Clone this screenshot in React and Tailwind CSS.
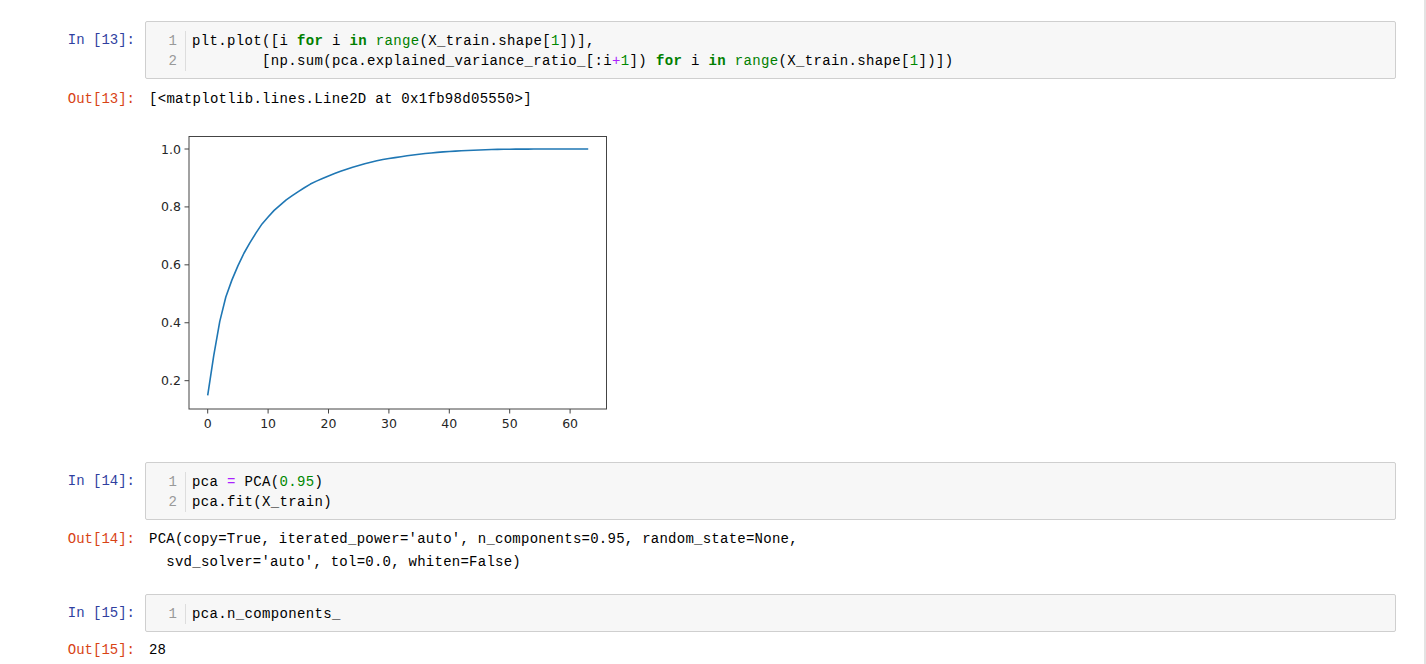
import React from "react";

const mono = { fontFamily: '"Liberation Mono", "DejaVu Sans Mono", monospace' };

// explained variance ratios (digits dataset, roughly)
const ratios = [
  0.1489, 0.1362, 0.1179, 0.0841, 0.0578, 0.0492, 0.0432, 0.0366, 0.0335, 0.0308,
  0.0237, 0.0227, 0.0183, 0.0177, 0.0147, 0.0141, 0.0132, 0.0125, 0.0102, 0.0091,
  0.0089, 0.008, 0.0077, 0.0072, 0.007, 0.006, 0.0058, 0.0052, 0.0049, 0.0043,
  0.0035, 0.0033, 0.0031, 0.003, 0.0028, 0.0026, 0.0024, 0.0021, 0.0019, 0.0017,
  0.0015, 0.0013, 0.0012, 0.001, 0.0009, 0.0008, 0.0007, 0.0006, 0.0005, 0.0004,
  0.0003, 0.0002, 0.0002, 0.0001, 0.0001, 0.00005, 0.00004, 0.00003, 0.00002, 0.00001,
  0.00001, 0, 0, 0,
];

const total = ratios.reduce((a, b) => a + b, 0);
let acc = 0;
const cumulative = ratios.map((r) => {
  acc += r;
  return acc / total;
});

const xPix = (i) => 57.7 + i * 6.04;
const yPix = (v) => 36 + (1 - v) * 289.6;

const Kw = ({ children }) => <span className="font-bold text-[#008000]">{children}</span>;
const Bi = ({ children }) => <span className="text-[#008000]">{children}</span>;
const Num = ({ children }) => <span className="text-[#008800]">{children}</span>;
const Op = ({ children }) => <span className="text-[#aa22ff]">{children}</span>;

const InPrompt = ({ n }) => (
  <div className="w-[145px] shrink-0 pr-[10px] pt-[9px] text-right text-[14px] leading-[20px] text-[#303f9f]" style={mono}>
    In [{n}]:
  </div>
);

const OutPrompt = ({ n }) => (
  <div className="w-[145px] shrink-0 pr-[10px] text-right text-[14px] text-[#d84315]" style={mono}>
    Out[{n}]:
  </div>
);

const CodeCell = ({ n, lines }) => (
  <div className="flex">
    <InPrompt n={n} />
    <div className="flex flex-1 rounded-[2px] border border-[#cfcfcf] bg-[#f7f7f7] pt-[9px] pb-[7px]" style={mono}>
      <div className="w-[40px] shrink-0 border-r border-[#dddddd] pr-[8px] text-right text-[14px] leading-[20px] text-[#999999]">
        {lines.map((_, i) => (
          <div key={i}>{i + 1}</div>
        ))}
      </div>
      <div className="pl-[6px] text-[14px] leading-[20px] tracking-[0.35px] whitespace-pre text-black">
        {lines.map((l, i) => (
          <div key={i}>{l}</div>
        ))}
      </div>
    </div>
  </div>
);

const Chart = () => {
  const points = cumulative.map((v, i) => `${xPix(i).toFixed(2)},${yPix(v).toFixed(2)}`).join(" ");
  const yTicks = [0.2, 0.4, 0.6, 0.8, 1.0];
  const xTicks = [0, 10, 20, 30, 40, 50, 60];
  return (
    <svg width="470" height="327" viewBox="0 0 470 327">
      <polyline points={points} fill="none" stroke="#1f77b4" strokeWidth="1.6" strokeLinejoin="round" />
      <rect x="39" y="23.5" width="417.5" height="272.5" fill="none" stroke="#444444" strokeWidth="1" />
      {yTicks.map((t) => (
        <g key={t}>
          <line x1="34.5" x2="39" y1={yPix(t)} y2={yPix(t)} stroke="#444444" strokeWidth="1" />
          <text
            x="31"
            y={yPix(t) + 4.5}
            textAnchor="end"
            fontSize="12.5"
            fill="#262626"
            fontFamily='"DejaVu Sans", sans-serif'
          >
            {t.toFixed(1)}
          </text>
        </g>
      ))}
      {xTicks.map((t) => (
        <g key={t}>
          <line x1={xPix(t)} x2={xPix(t)} y1="296" y2="300.5" stroke="#444444" strokeWidth="1" />
          <text
            x={xPix(t)}
            y="315"
            textAnchor="middle"
            fontSize="12.5"
            fill="#262626"
            fontFamily='"DejaVu Sans", sans-serif'
          >
            {t}
          </text>
        </g>
      ))}
    </svg>
  );
};

export default function App() {
  return (
    <div className="flex h-[664px] w-full overflow-hidden bg-white">
      <div className="flex-1 pt-[21px] pr-[28px]">
        {/* In [13] */}
        <CodeCell
          n={13}
          lines={[
            <>
              plt.plot([i <Kw>for</Kw> i <Kw>in</Kw> <Bi>range</Bi>(X_train.shape[<Num>1</Num>])],
            </>,
            <>
              {"        "}[np.sum(pca.explained_variance_ratio_[:i<Op>+</Op><Num>1</Num>]) <Kw>for</Kw> i <Kw>in</Kw>{" "}
              <Bi>range</Bi>(X_train.shape[<Num>1</Num>])])
            </>,
          ]}
        />

        {/* Out [13] */}
        <div className="mt-[10px] flex leading-[20px]">
          <OutPrompt n={13} />
          <div className="pl-[4px] text-[14px] tracking-[0.3px] whitespace-pre text-black" style={mono}>
            [&lt;matplotlib.lines.Line2D at 0x1fb98d05550&gt;]
          </div>
        </div>
        <div className="mt-[4px] flex">
          <div className="w-[145px] shrink-0" />
          <div className="pl-[5px]">
            <Chart />
          </div>
        </div>

        {/* In [14] */}
        <div className="mt-[22px]">
          <CodeCell
            n={14}
            lines={[
              <>
                pca <Op>=</Op> PCA(<Num>0.95</Num>)
              </>,
              <>pca.fit(X_train)</>,
            ]}
          />
        </div>

        {/* Out [14] */}
        <div className="mt-[8px] flex leading-[23px]">
          <OutPrompt n={14} />
          <div className="pl-[4px] text-[14px] tracking-[0.25px] whitespace-pre text-black" style={mono}>
            <div>PCA(copy=True, iterated_power='auto', n_components=0.95, random_state=None,</div>
            <div>  svd_solver='auto', tol=0.0, whiten=False)</div>
          </div>
        </div>

        {/* In [15] */}
        <div className="mt-[20px]">
          <CodeCell n={15} lines={[<>pca.n_components_</>]} />
        </div>

        {/* Out [15] */}
        <div className="mt-[8px] flex leading-[20px]">
          <OutPrompt n={15} />
          <div className="pl-[4px] text-[14px] whitespace-pre text-black" style={mono}>
            28
          </div>
        </div>
      </div>
      <div className="w-[2px] shrink-0 bg-[#e3e3e3]" />
    </div>
  );
}
